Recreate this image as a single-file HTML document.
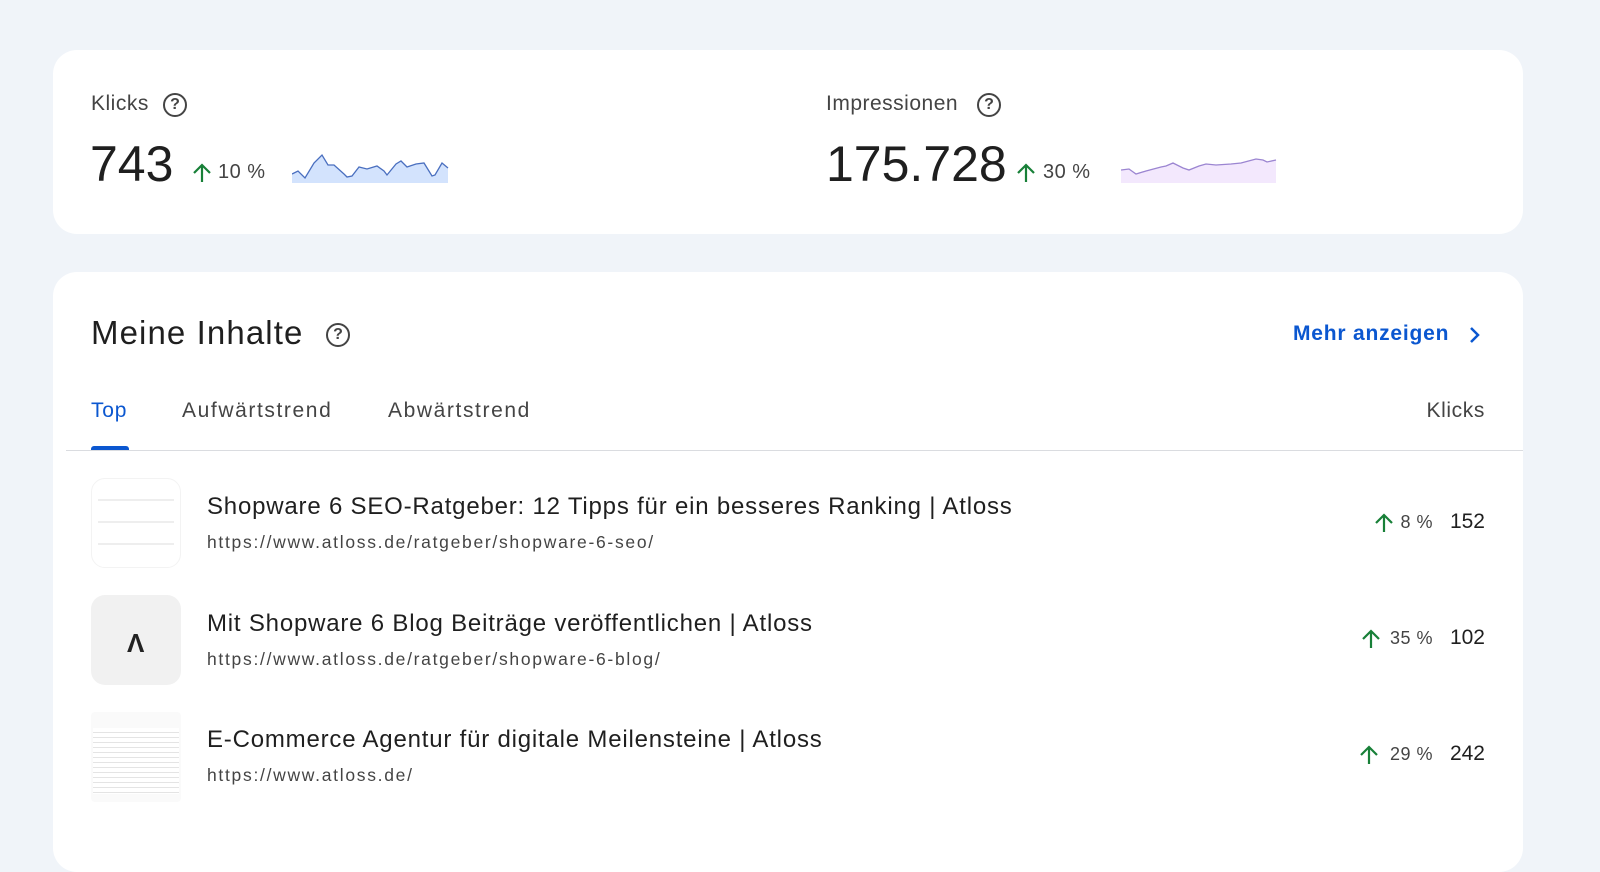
<!DOCTYPE html>
<html><head><meta charset="utf-8"><style>
*{margin:0;padding:0;box-sizing:border-box}
body{width:1600px;height:825px;overflow:hidden;background:#f0f4f9;font-family:"Liberation Sans",Arial,sans-serif;color:#1f1f1f;position:relative}
.card{position:absolute;background:#fff;border-radius:24px}
.a{position:absolute;white-space:nowrap}
.q{display:inline-block;width:24px;height:24px;border:2px solid #444;border-radius:50%;font-size:16px;font-weight:bold;text-align:center;line-height:20px;color:#444}
.thumb{position:absolute;left:91px;width:90px;height:90px;border-radius:14px}
.t{font-size:24px;letter-spacing:.8px}
.u{font-size:17.5px;color:#444;letter-spacing:1.7px}
.p{font-size:18px;color:#444;letter-spacing:.5px}
</style></head><body>
<div class="card" style="left:53px;top:50px;width:1470px;height:184px"></div>
<div class="card" style="left:53px;top:272px;width:1470px;height:600px"></div>

<div class="a" style="left:91px;top:92px;font-size:21px;color:#444;letter-spacing:.5px">Klicks</div>
<div class="a q" style="left:163px;top:93px">?</div>
<div class="a" style="left:90px;top:135px;font-size:50px;color:#1f1f1f">743</div>
<svg class="a" style="left:192px;top:163px" width="20" height="20" viewBox="0 0 20 20"><path d="M10 19 V3 M2 10 L10 2 L18 10" fill="none" stroke="#188038" stroke-width="2.2"/></svg>
<div class="a" style="left:218px;top:161px;font-size:20px;color:#444;letter-spacing:.5px">10 %</div>
<svg class="a" style="left:292px;top:150px" width="157" height="33" viewBox="0 0 157 33"><path d="M0 24 L6 21 L13 28 L22 13 L30 5 L36 15 L42 15 L52 24 L55 27 L60 26 L67 17 L75 19 L85 16 L92 21 L95 25 L104 14 L109 11 L115 17 L124 14 L132 13 L140 26 L143 25 L150 13 L156 18 L156 33 L0 33Z" fill="#d3e3fd" stroke="none"/><path d="M0 24 L6 21 L13 28 L22 13 L30 5 L36 15 L42 15 L52 24 L55 27 L60 26 L67 17 L75 19 L85 16 L92 21 L95 25 L104 14 L109 11 L115 17 L124 14 L132 13 L140 26 L143 25 L150 13 L156 18" fill="none" stroke="#4a6fbf" stroke-width="1.3"/></svg>

<div class="a" style="left:826px;top:92px;font-size:21px;color:#444;letter-spacing:.5px">Impressionen</div>
<div class="a q" style="left:977px;top:93px">?</div>
<div class="a" style="left:826px;top:135px;font-size:50px;color:#1f1f1f">175.728</div>
<svg class="a" style="left:1016px;top:163px" width="20" height="20" viewBox="0 0 20 20"><path d="M10 19 V3 M2 10 L10 2 L18 10" fill="none" stroke="#188038" stroke-width="2.2"/></svg>
<div class="a" style="left:1043px;top:161px;font-size:20px;color:#444;letter-spacing:.5px">30 %</div>
<svg class="a" style="left:1121px;top:150px" width="156" height="33" viewBox="0 0 156 33"><path d="M0 20 L8 19 L15 24 L25 21 L40 17 L45 16 L52 13 L62 18 L68 20 L78 16 L85 14 L95 15 L110 14 L120 13 L135 9 L142 10 L146 12 L155 10 L155 33 L0 33Z" fill="#f3e8fd"/><path d="M0 20 L8 19 L15 24 L25 21 L40 17 L45 16 L52 13 L62 18 L68 20 L78 16 L85 14 L95 15 L110 14 L120 13 L135 9 L142 10 L146 12 L155 10" fill="none" stroke="#9b85d1" stroke-width="1.3"/></svg>

<div class="a" style="left:91px;top:314px;font-size:33px;color:#1f1f1f;letter-spacing:1.1px">Meine Inhalte</div>
<div class="a q" style="left:326px;top:323px">?</div>
<div class="a" style="left:1293px;top:322px;font-size:21px;color:#0b57d0;font-weight:bold;letter-spacing:.8px">Mehr anzeigen</div>
<svg class="a" style="left:1468px;top:325px" width="14" height="20" viewBox="0 0 14 20"><path d="M3 3 L10 10 L3 17" fill="none" stroke="#0b57d0" stroke-width="2.5"/></svg>

<div class="a" style="left:91px;top:399px;font-size:21px;color:#0b57d0;letter-spacing:.8px">Top</div>
<div class="a" style="left:182px;top:399px;font-size:21px;color:#444;letter-spacing:1.6px">Aufwärtstrend</div>
<div class="a" style="left:388px;top:399px;font-size:21px;color:#444;letter-spacing:1.6px">Abwärtstrend</div>
<div class="a" style="right:115px;top:399px;font-size:21px;color:#444;letter-spacing:.6px">Klicks</div>
<div class="a" style="left:91px;top:446px;width:38px;height:4px;background:#0b57d0;border-radius:3px 3px 0 0"></div>
<div class="a" style="left:66px;top:450px;width:1457px;height:1px;background:#dadce0"></div>

<div class="thumb" style="top:478px;background:#fff;border:1px solid #f3f3f3"><div style="margin:20px 6px;height:2px;background:#eee"></div><div style="margin:20px 6px;height:2px;background:#eee"></div><div style="margin:16px 6px;height:2px;background:#eee"></div></div>
<div class="thumb" style="top:595px;background:#f1f1f1"><div style="position:absolute;left:36px;top:33px;font-size:26px;font-weight:bold;color:#222">Λ</div></div>
<div class="thumb" style="top:712px;background:#fafafa;border-radius:4px"><div style="margin:16px 2px 0;height:66px;background:repeating-linear-gradient(#fff 0 4px,#e4e4e4 4px 5px)"></div></div>

<div class="a t" style="left:207px;top:493px">Shopware 6 SEO-Ratgeber: 12 Tipps für ein besseres Ranking | Atloss</div>
<div class="a u" style="left:207px;top:532px">https://www.atloss.de/ratgeber/shopware-6-seo/</div>
<svg class="a" style="left:1374px;top:513px" width="20" height="20" viewBox="0 0 20 20"><path d="M10 19 V3 M2 10 L10 2 L18 10" fill="none" stroke="#188038" stroke-width="2.2"/></svg>
<div class="a p" style="right:167px;top:512px">8 %</div>
<div class="a" style="right:115px;top:510px;font-size:21px">152</div>

<div class="a t" style="left:207px;top:610px">Mit Shopware 6 Blog Beiträge veröffentlichen | Atloss</div>
<div class="a u" style="left:207px;top:649px">https://www.atloss.de/ratgeber/shopware-6-blog/</div>
<svg class="a" style="left:1361px;top:629px" width="20" height="20" viewBox="0 0 20 20"><path d="M10 19 V3 M2 10 L10 2 L18 10" fill="none" stroke="#188038" stroke-width="2.2"/></svg>
<div class="a p" style="right:167px;top:628px">35 %</div>
<div class="a" style="right:115px;top:626px;font-size:21px">102</div>

<div class="a t" style="left:207px;top:726px">E-Commerce Agentur für digitale Meilensteine | Atloss</div>
<div class="a u" style="left:207px;top:765px">https://www.atloss.de/</div>
<svg class="a" style="left:1359px;top:745px" width="20" height="20" viewBox="0 0 20 20"><path d="M10 19 V3 M2 10 L10 2 L18 10" fill="none" stroke="#188038" stroke-width="2.2"/></svg>
<div class="a p" style="right:167px;top:744px">29 %</div>
<div class="a" style="right:115px;top:742px;font-size:21px">242</div>
</body></html>
